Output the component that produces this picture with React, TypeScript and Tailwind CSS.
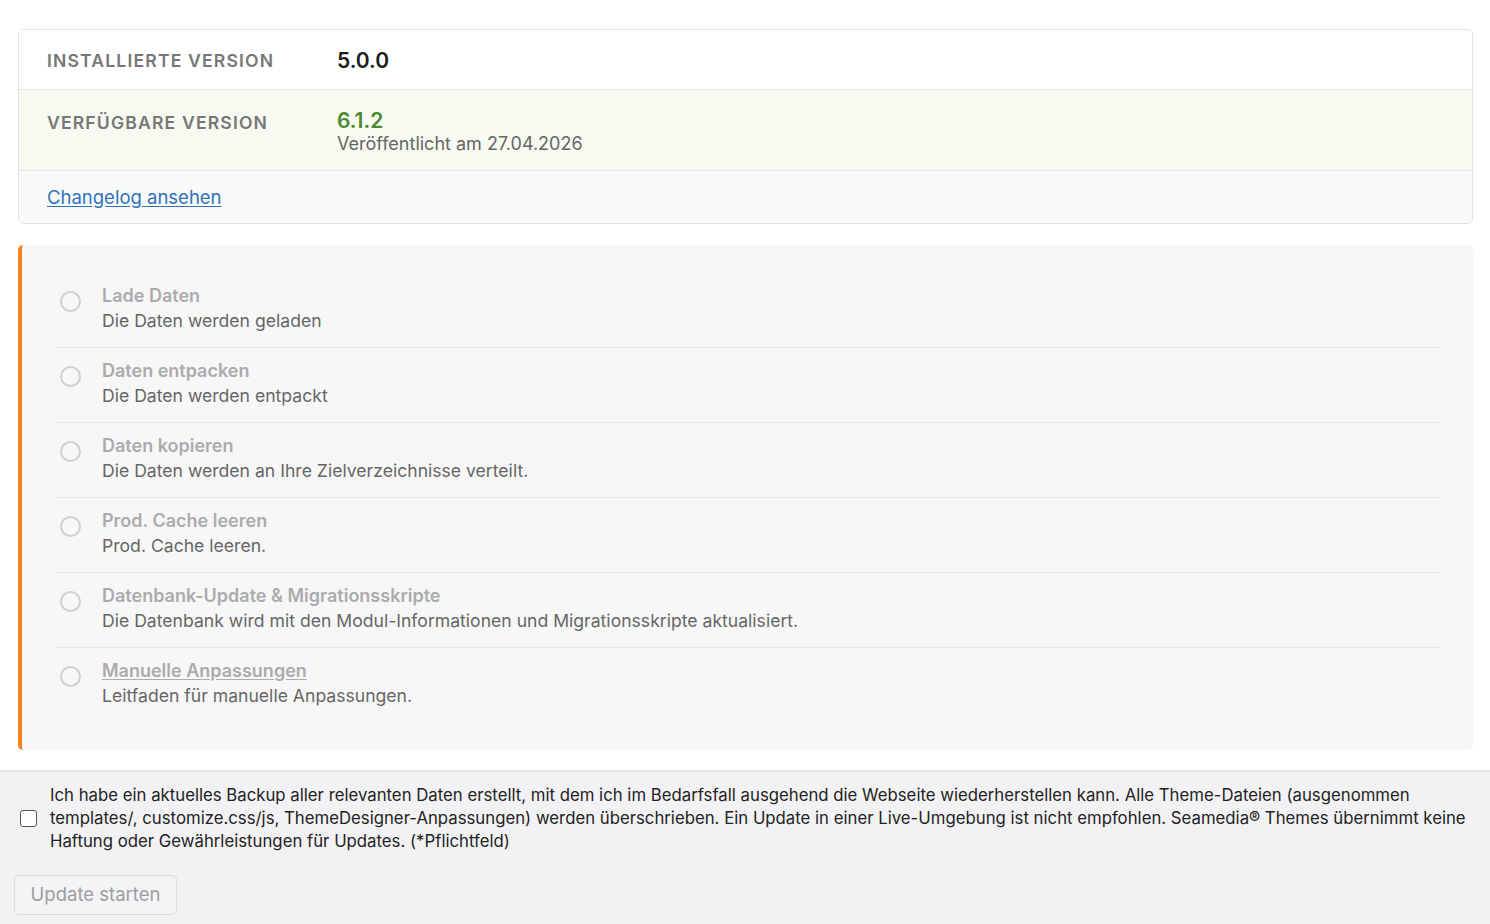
import React from 'react';

const steps = [
  { title: 'Lade Daten', desc: 'Die Daten werden geladen' },
  { title: 'Daten entpacken', desc: 'Die Daten werden entpackt' },
  { title: 'Daten kopieren', desc: 'Die Daten werden an Ihre Zielverzeichnisse verteilt.' },
  { title: 'Prod. Cache leeren', desc: 'Prod. Cache leeren.' },
  {
    title: 'Datenbank-Update & Migrationsskripte',
    desc: 'Die Datenbank wird mit den Modul-Informationen und Migrationsskripte aktualisiert.',
  },
  { title: 'Manuelle Anpassungen', desc: 'Leitfaden für manuelle Anpassungen.', link: true },
];

const StepRow = ({ title, desc, link, last }: { title: string; desc: string; link?: boolean; last: boolean }) => (
  <div className={'flex items-start gap-[21px] pl-[4px] h-[75px] pt-[10px] ' + (last ? '' : 'border-b border-[#e6e6e8]')}>
    <div className="mt-[8px] w-[21px] h-[21px] rounded-full border-2 border-[#d0d0d2] shrink-0" />
    <div className="flex flex-col leading-[25px]">
      <span className={'text-[18px] font-semibold text-[#ababad] ' + (link ? 'underline underline-offset-2' : '')}>{title}</span>
      <span className="text-[17.6px] text-[#666]">{desc}</span>
    </div>
  </div>
);

export default function App() {
  return (
    <div className="min-h-[924px] bg-white flex flex-col" style={{ fontFamily: 'Inter, "Noto Sans", sans-serif' }}>
      <div className="px-[18px] pt-[29px] pr-[17px]">
        <div className="border border-[#e3e3e3] rounded-[5px] overflow-hidden">
          <div className="flex items-center h-[60px] bg-white border-b border-[#e6e6e6] pt-[3px]">
            <div className="w-[318px] pl-[28px] text-[17.6px] font-semibold tracking-[0.065em] uppercase text-[#777]">Installierte Version</div>
            <div className="text-[21px] font-semibold text-[#1c1c1c]">5.0.0</div>
          </div>
          <div className="flex items-start h-[81px] bg-[#f7faf1] border-b border-[#e6e6e6] pt-[19px]">
            <div className="w-[318px] pl-[28px] text-[17.6px] font-semibold tracking-[0.065em] uppercase text-[#777] leading-[26px] pt-[1px]">Verfügbare Version</div>
            <div className="flex flex-col">
              <span className="text-[21px] font-semibold text-[#4b8a2e] leading-[24px]">6.1.2</span>
              <span className="text-[18px] text-[#666] leading-[22px]">Veröffentlicht am 27.04.2026</span>
            </div>
          </div>
          <div className="flex items-center h-[52px] bg-[#fafafa] pl-[28px] pt-[1px]">
            <a href="#" className="text-[18.5px] text-[#2f72b8] underline underline-offset-2">Changelog ansehen</a>
          </div>
        </div>
      </div>

      <div className="px-[18px] pr-[17px] pt-[21px]">
        <div className="bg-[#f7f7f8] border-l-4 border-[#f5831f] rounded-[5px] pl-[34px] pr-[33px] pt-[28px] pb-[27px]">
          {steps.map((s, i) => (
            <StepRow key={s.title} {...s} last={i === steps.length - 1} />
          ))}
        </div>
      </div>

      <div className="mt-[20px] flex-1 bg-[#f2f2f4] border-t-2 border-[#e4e4e6] pt-[12px] pb-[10px]">
        <div className="flex items-center gap-[13px] pl-[20px] pr-[18px]">
          <input type="checkbox" className="w-[17px] h-[17px] shrink-0 appearance-none border-[1.5px] border-[#555] rounded-[3px] bg-white" />
          <p className="text-[16.75px] leading-[23px] text-[#222]">
            Ich habe ein aktuelles Backup aller relevanten Daten erstellt, mit dem ich im Bedarfsfall ausgehend die Webseite wiederherstellen kann. Alle Theme-Dateien (ausgenommen templates/, customize.css/js, ThemeDesigner-Anpassungen) werden überschrieben. Ein Update in einer Live-Umgebung ist nicht empfohlen. Seamedia® Themes übernimmt keine Haftung oder Gewährleistungen für Updates. (*Pflichtfeld)
          </p>
        </div>
        <div className="pl-[14px] mt-[22px]">
          <button className="h-[40px] w-[163px] border border-[#dcdcde] rounded-[5px] text-[18.5px] text-[#9d9d9f] bg-[#f4f4f6]">Update starten</button>
        </div>
      </div>
    </div>
  );
}
